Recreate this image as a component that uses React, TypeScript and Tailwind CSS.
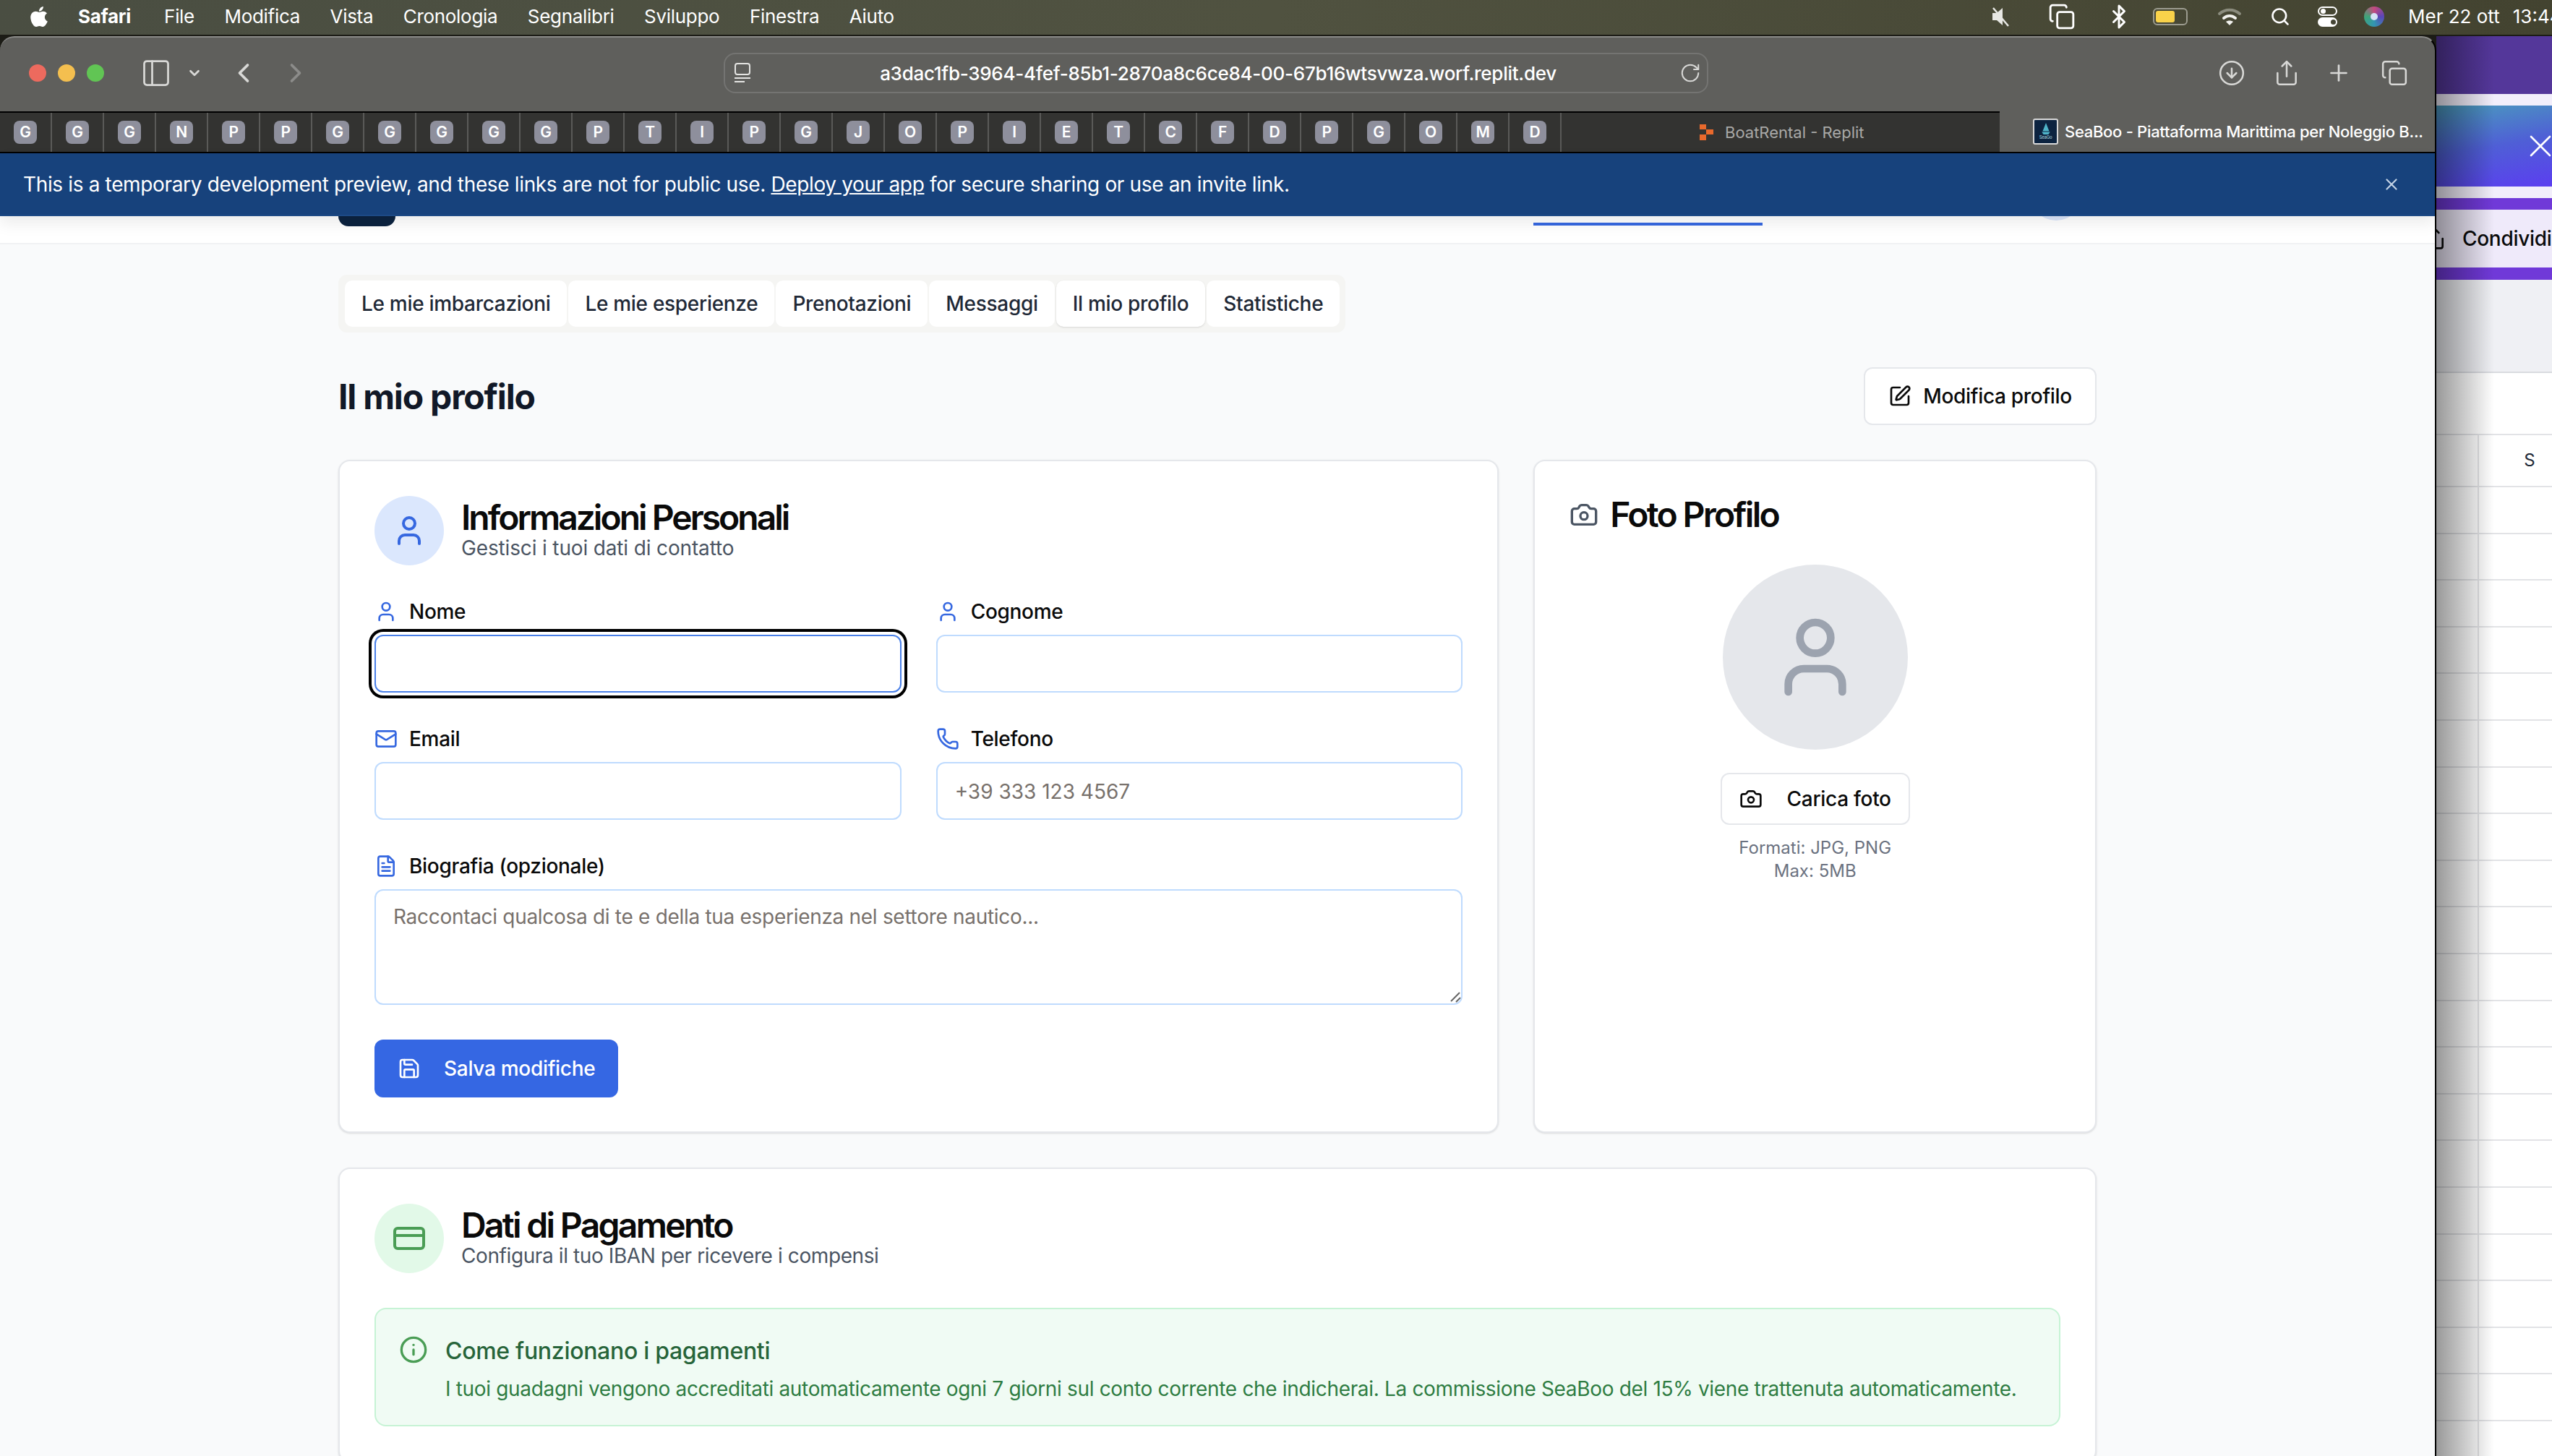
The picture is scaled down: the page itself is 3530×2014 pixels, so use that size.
import React from 'react';
import {
  Bluetooth,
  Camera,
  ChevronDown,
  ChevronLeft,
  ChevronRight,
  CircleArrowDown,
  Copy,
  CreditCard,
  FileText,
  Info,
  Mail,
  PanelLeft,
  Phone,
  Plus,
  RotateCw,
  Save,
  Search,
  Share,
  SquarePen,
  User,
  X,
} from 'lucide-react';
import { FaApple } from 'react-icons/fa';

const menuItems = ['File', 'Modifica', 'Vista', 'Cronologia', 'Segnalibri', 'Sviluppo', 'Finestra', 'Aiuto'];
const tabLetters = 'GGGNPPGGGGGPTIPGJOPIETCFDPGOMD'.split('');
const pageTabs = ['Le mie imbarcazioni', 'Le mie esperienze', 'Prenotazioni', 'Messaggi', 'Il mio profilo', 'Statistiche'];

const MenuBar = () => (
  <div className="flex h-[48px] shrink-0 items-center bg-linear-to-r from-[#4a4e42] via-[#505240] to-[#434330] pb-[3px] text-[26px] text-white">
    <FaApple className="ml-[38px] mr-[38px] h-[32px] w-[32px]" />
    <span className="mr-[46px] font-bold">Safari</span>
    <div className="flex gap-[41.5px]">
      {menuItems.map((item) => (
        <span key={item}>{item}</span>
      ))}
    </div>
    <div className="ml-auto flex w-[776px] items-center overflow-hidden whitespace-nowrap tracking-normal">
      <svg viewBox="0 0 26 28" className="h-[28px] w-[26px] shrink-0" fill="none">
        <path d="M2 9h6l8-7v24l-8-7H2z" fill="#e8e8e4" />
        <path d="M3 2l21 25" stroke="#e8e8e4" strokeWidth="2.5" />
      </svg>
      <Copy className="ml-[53px] h-[38px] w-[38px] shrink-0" strokeWidth={1.8} />
      <Bluetooth className="ml-[42px] h-[36px] w-[36px] shrink-0" strokeWidth={2} />
      <div className="ml-[29px] flex h-[24px] w-[48px] shrink-0 items-center rounded-[6px] border-2 border-[#9b9b8f] p-[2px]">
        <div className="h-full w-[26px] rounded-[3px] bg-[#f9d24a]" />
      </div>
      <svg viewBox="0 0 34 26" className="ml-[41px] h-[26px] w-[34px] shrink-0" fill="none" strokeLinecap="round">
        <path d="M3 9c8-7 20-7 28 0" stroke="#8b8c7e" strokeWidth="4" />
        <path d="M9 15c5-4 11-4 16 0" stroke="#f2f2ee" strokeWidth="4" />
        <path d="M17 25l-5-5c3-2 7-2 10 0z" fill="#f2f2ee" />
      </svg>
      <Search className="ml-[39px] h-[28px] w-[28px] shrink-0" strokeWidth={2.2} />
      <div className="ml-[38px] flex w-[27px] shrink-0 flex-col gap-[2px]">
        <div className="flex h-[13px] items-center rounded-full border-2 border-white pl-[2px]">
          <div className="h-[7px] w-[7px] rounded-full bg-white" />
        </div>
        <div className="flex h-[13px] items-center justify-end rounded-full bg-white pr-[2px]">
          <div className="h-[7px] w-[7px] rounded-full bg-[#454535]" />
        </div>
      </div>
      <div className="ml-[37px] flex h-[28px] w-[28px] shrink-0 items-center justify-center rounded-full bg-[conic-gradient(#c64a7e,#5a46b8,#3296b0,#3fa578,#c64a7e)]">
        <div className="h-[10px] w-[10px] rounded-full bg-[#d5e4f5]" />
      </div>
      <span className="ml-[33px]">Mer 22 ott</span>
      <span className="ml-[18px]">13:44</span>
    </div>
  </div>
);

const Toolbar = () => (
  <div className="flex h-[102px] shrink-0 items-center pb-[4px] text-[#d8d8d6]">
    <div className="ml-[40px] flex gap-[16px]">
      <div className="h-[24px] w-[24px] rounded-full bg-[#ed6a5e]" />
      <div className="h-[24px] w-[24px] rounded-full bg-[#f4bf4f]" />
      <div className="h-[24px] w-[24px] rounded-full bg-[#61c554]" />
    </div>
    <PanelLeft className="ml-[50px] h-[44px] w-[44px]" strokeWidth={1.5} />
    <ChevronDown className="ml-[20px] h-[22px] w-[22px]" strokeWidth={3} />
    <ChevronLeft className="ml-[35px] h-[44px] w-[44px]" strokeWidth={2} />
    <ChevronRight className="ml-[28px] h-[44px] w-[44px] text-[#8c8c8a]" strokeWidth={2} />
    <div className="ml-[570px] flex h-[56px] w-[1362px] items-center rounded-[16px] border-2 border-[#747472]">
      <svg viewBox="0 0 24 28" className="ml-[12px] h-[28px] w-[24px]" fill="none" stroke="#e4e4e2" strokeWidth="2">
        <rect x="2" y="1" width="20" height="15" rx="3" />
        <path d="M1 21h22M1 26h14" />
      </svg>
      <span className="flex-1 pl-[8px] text-center text-[26px] font-medium tracking-[-0.27px] text-white">a3dac1fb-3964-4fef-85b1-2870a8c6ce84-00-67b16wtsvwza.worf.replit.dev</span>
      <RotateCw className="mr-[8px] h-[30px] w-[30px]" strokeWidth={1.6} />
    </div>
    <CircleArrowDown className="ml-[705px] h-[38px] w-[38px]" strokeWidth={1.6} />
    <Share className="ml-[38px] h-[40px] w-[38px]" strokeWidth={1.6} />
    <Plus className="ml-[35px] h-[36px] w-[36px]" strokeWidth={1.8} />
    <Copy className="ml-[40px] h-[38px] w-[38px]" strokeWidth={1.6} />
  </div>
);

const TabStrip = () => (
  <div className="flex h-[58px] shrink-0 border-b-2 border-black">
    <div className="flex w-[2766px] border-t-2 border-black bg-[#333331]">
      {tabLetters.map((letter, i) => (
        <div key={i} className="flex w-[72px] items-center justify-center border-r-2 border-[#5a5a58]">
          <div className="flex h-[32px] w-[32px] items-center justify-center rounded-[8px] bg-[#8e8f9c] text-[21px] font-semibold text-white">{letter}</div>
        </div>
      ))}
      <div className="flex flex-1 items-center pl-[191px] text-[22px] tracking-normal text-[#a9a9a7]">
        <svg viewBox="0 0 20 22" className="mr-[15px] h-[22px] w-[20px]">
          <path d="M0 0h9v7H0zM9 7h10v7H9zM0 14h9v8H0z" fill="#e8692c" />
        </svg>
        BoatRental - Replit
      </div>
    </div>
    <div className="flex flex-1 items-center pl-[46px] text-[22px] font-medium text-white">
      <div className="mr-[9px] flex h-[36px] w-[35px] shrink-0 flex-col items-center justify-center rounded-[3px] border-2 border-[#d8d8d8] bg-[#0c2340]">
        <svg viewBox="0 0 12 14" className="h-[16px] w-[14px]">
          <path d="M6 0l4 10H2zM1 11h10l-2 3H3z" fill="#4fb3c8" />
        </svg>
        <span className="text-[6px] leading-[8px] text-[#9fc8d4]">SeaGo</span>
      </div>
      <span className="truncate">SeaBoo - Piattaforma Marittima per Noleggio B...</span>
    </div>
  </div>
);

const Banner = () => (
  <div className="relative z-10 flex h-[87px] shrink-0 items-center justify-between border-b-2 border-[#1d4a85] bg-[#17427c] pl-[32px] pr-[47px] text-[28px] tracking-[-0.35px] text-white shadow-[0_10px_20px_rgba(0,0,0,0.08)]">
    <span>
      This is a temporary development preview, and these links are not for public use. <span className="underline">Deploy your app</span> for secure sharing or use an invite link.
    </span>
    <X className="h-[26px] w-[26px] text-[#c4d3e6]" strokeWidth={2} />
  </div>
);

const Field = ({ icon: Icon, label, placeholder, focused }: { icon: React.ElementType; label: string; placeholder?: string; focused?: boolean }) => (
  <div className="flex flex-col gap-[12px]">
    <label className="flex items-center gap-[16px] text-[28px] font-medium leading-[40px] text-[#0a0a0a]">
      <Icon className="h-[32px] w-[32px] text-[#3668e0]" />
      {label}
    </label>
    <input
      readOnly
      placeholder={placeholder}
      className={
        focused
          ? 'h-[80px] w-full rounded-[12px] border-2 border-[#4a80e8] bg-white px-[24px] text-[28px] outline-none ring-4 ring-black ring-offset-4'
          : 'h-[80px] w-full rounded-[12px] border-2 border-[#bfdbfe] bg-white px-[24px] pt-[2px] text-[28px] tracking-normal outline-none placeholder:text-[#78716c]'
      }
    />
  </div>
);

const PersonalCard = () => (
  <div className="col-span-2 rounded-[16px] border-2 border-[#e5e7eb] bg-white p-[48px] pb-[47px] shadow-sm">
    <div className="flex items-center gap-[24px]">
      <div className="flex h-[96px] w-[96px] items-center justify-center rounded-full bg-[#dbe7fd]">
        <User className="h-[48px] w-[48px] text-[#3668e0]" />
      </div>
      <div>
        <h2 className="text-[48px] font-semibold leading-[52px] tracking-[-3px] text-[#0a0a0a]">Informazioni Personali</h2>
        <p className="-mt-[4px] text-[28px] leading-[40px] tracking-[-0.15px] text-[#4b5563]">Gestisci i tuoi dati di contatto</p>
      </div>
    </div>
    <div className="mt-[44px] grid grid-cols-2 gap-x-[48px] gap-y-[44px]">
      <Field icon={User} label="Nome" focused />
      <Field icon={User} label="Cognome" />
      <Field icon={Mail} label="Email" />
      <Field icon={Phone} label="Telefono" placeholder="+39 333 123 4567" />
    </div>
    <div className="mt-[44px] flex flex-col gap-[12px]">
      <label className="flex items-center gap-[16px] text-[28px] font-medium leading-[40px] text-[#0a0a0a]">
        <FileText className="h-[32px] w-[32px] text-[#3668e0]" />
        Biografia (opzionale)
      </label>
      <div className="relative">
        <textarea
          readOnly
          placeholder="Raccontaci qualcosa di te e della tua esperienza nel settore nautico..."
          className="block h-[160px] w-full resize-none rounded-[12px] border-2 border-[#bfdbfe] bg-white px-[24px] py-[16px] text-[28px] leading-[40px] outline-none placeholder:text-[#78716c]"
        />
        <svg viewBox="0 0 16 16" className="absolute bottom-[3px] right-[2px] h-[16px] w-[16px]" stroke="#666666" strokeWidth="2">
          <path d="M2 14L14 2M9 15l6-6" />
        </svg>
      </div>
    </div>
    <button className="mt-[48px] flex h-[80px] items-center gap-[32px] rounded-[12px] bg-[#3567e3] px-[32px] text-[28px] font-medium text-white">
      <Save className="h-[32px] w-[32px]" />
      Salva modifiche
    </button>
  </div>
);

const PhotoCard = () => (
  <div className="flex flex-col rounded-[16px] border-2 border-[#e5e7eb] bg-white p-[48px] shadow-sm">
    <div className="flex items-center gap-[16px]">
      <Camera className="h-[40px] w-[40px] text-[#4b5563]" />
      <h2 className="text-[48px] font-semibold leading-[52px] tracking-[-2.7px] text-[#0a0a0a]">Foto Profilo</h2>
    </div>
    <div className="mt-[43px] flex flex-col items-center">
      <div className="flex h-[256px] w-[256px] items-center justify-center rounded-full bg-[#e5e7eb]">
        <User className="h-[128px] w-[128px] text-[#9ca3af]" />
      </div>
      <button className="mt-[32px] flex h-[72px] items-center gap-[34px] rounded-[12px] border-2 border-[#e5e7eb] bg-white px-[24px] text-[28px] font-medium text-[#0a0a0a]">
        <Camera className="h-[32px] w-[32px]" />
        Carica foto
      </button>
      <p className="mt-[16px] text-center text-[24px] leading-[32px] tracking-normal text-[#6b7280]">
        Formati: JPG, PNG
        <br />
        Max: 5MB
      </p>
    </div>
  </div>
);

const PaymentCard = () => (
  <div className="mt-[48px] rounded-[16px] border-2 border-[#e5e7eb] bg-white p-[48px] shadow-sm">
    <div className="flex items-center gap-[24px]">
      <div className="flex h-[96px] w-[96px] items-center justify-center rounded-full bg-[#e2f9e8]">
        <CreditCard className="h-[48px] w-[48px] text-[#4a9d55]" />
      </div>
      <div>
        <h2 className="text-[48px] font-semibold leading-[52px] tracking-[-2.7px] text-[#0a0a0a]">Dati di Pagamento</h2>
        <p className="-mt-[4px] text-[28px] leading-[40px] tracking-[-0.4px] text-[#4b5563]">Configura il tuo IBAN per ricevere i compensi</p>
      </div>
    </div>
    <div className="mt-[48px] flex gap-[24px] rounded-[16px] border-2 border-[#c6f3d5] bg-[#f0fbf4] px-[32px] pb-[30px] pt-[34px]">
      <Info className="mt-[2px] h-[40px] w-[40px] shrink-0 text-[#4a9d55]" />
      <div>
        <h3 className="text-[32px] font-medium leading-[48px] text-[#27643a]">Come funzionano i pagamenti</h3>
        <p className="mt-[8px] text-[28px] leading-[40px] tracking-[-0.33px] text-[#2f7d43]">
          I tuoi guadagni vengono accreditati automaticamente ogni 7 giorni sul conto corrente che indicherai. La commissione SeaBoo del 15% viene trattenuta automaticamente.
        </p>
      </div>
    </div>
  </div>
);

const ProfilePage = () => (
  <div className="min-h-0 flex-1 overflow-hidden bg-[#f9fafb]">
    <div className="flex h-[39px] items-start overflow-hidden border-b-2 border-[#f1f2f4] bg-white">
      <div className="ml-[468px] h-[14px] w-[79px] rounded-b-[14px] bg-[#0c2340]" />
      <div className="ml-[1574px] mt-[9px] h-[4px] w-[317px] bg-[#3668e0]" />
      <div className="-mt-[66px] ml-[370px] h-[72px] w-[72px] rounded-full bg-[#dbe6fb]" />
    </div>
    <div className="mx-auto w-[2432px] pt-[42px]">
      <div className="flex h-[80px] w-fit items-center gap-[2px] rounded-[12px] bg-[#f5f5f3] py-[8px] pl-[9px] pr-[8px]">
        {pageTabs.map((tab) => (
          <div
            key={tab}
            className={
              tab === 'Il mio profilo'
                ? 'flex h-[64px] items-center rounded-[10px] bg-white px-[23px] text-[28px] font-medium text-[#1f2937] shadow-sm'
                : 'flex h-[64px] items-center rounded-[10px] bg-white px-[23px] text-[28px] font-medium text-[#1f2937]'
            }
          >
            {tab}
          </div>
        ))}
      </div>
      <div className="mt-[48px] flex h-[80px] items-center justify-between">
        <h1 className="pt-[2px] text-[48px] font-bold tracking-tight text-[#111827]">Il mio profilo</h1>
        <button className="flex h-[80px] items-center gap-[16px] rounded-[12px] border-2 border-[#e5e7eb] bg-white px-[32px] text-[28px] font-medium text-[#0a0a0a]">
          <SquarePen className="h-[32px] w-[32px]" />
          Modifica profilo
        </button>
      </div>
      <div className="mt-[48px] grid grid-cols-3 gap-[48px]">
        <PersonalCard />
        <PhotoCard />
      </div>
      <PaymentCard />
    </div>
  </div>
);

const rows = Array.from({ length: 22 }, (_, i) => i);

const SidePanel = () => (
  <div className="relative flex min-w-0 flex-1 flex-col overflow-hidden bg-white">
    <div className="h-[80px] shrink-0 bg-[#54379a]" />
    <div className="h-[16px] shrink-0 bg-[#f2eefb]" />
    <div className="flex h-[112px] shrink-0 items-center justify-end bg-[linear-gradient(170deg,#4a9bbd_0%,#4f5fd6_50%,#5b3ef0_100%)]">
      <X className="-mr-[10px] h-[52px] w-[52px] text-white" strokeWidth={1.2} />
    </div>
    <div className="h-[16px] shrink-0 bg-[#f2eefb]" />
    <div className="h-[16px] shrink-0 bg-[#7039d8]" />
    <div className="flex h-[80px] shrink-0 items-center gap-[22px] whitespace-nowrap bg-[#efeafa] text-[28px] font-medium text-[#0a0a0a]">
      <Share className="-ml-[18px] h-[32px] w-[32px] shrink-0" />
      Condividi
    </div>
    <div className="h-[17px] shrink-0 bg-[#7039d8]" />
    <div className="h-[129px] shrink-0 border-b-2 border-[#d9dbe0] bg-[#eff0f4]" />
    <div className="h-[84px] shrink-0" />
    {rows.map((row) => (
      <div key={row} className={row === 0 ? 'flex h-[72px] shrink-0 border-t-2 border-[#e2e3e6]' : 'flex h-[64.6px] shrink-0 border-t-2 border-[#e2e3e6]'}>
        <div className="w-[59px] shrink-0 border-r-2 border-[#e2e3e6]" />
        <div className="flex w-[140px] shrink-0 items-center justify-center text-[24px] tracking-normal text-[#1f2937]">{row === 0 ? 'S' : ''}</div>
      </div>
    ))}
    <div className="absolute inset-y-0 left-0 w-[80px] bg-linear-to-r from-black/40 to-transparent" />
  </div>
);

export default function App() {
  return (
    <div className="flex h-[2014px] w-[3530px] flex-col overflow-hidden bg-[#1c1c16] font-[Inter,sans-serif] tracking-[-0.3px]">
      <MenuBar />
      <div className="mt-[2px] flex min-h-0 flex-1">
        <div className="flex w-[3370px] shrink-0 flex-col overflow-hidden rounded-t-[20px] border-r-2 border-t-2 border-r-black border-t-[#8a8a88] bg-[#5f5f5c]">
          <Toolbar />
          <TabStrip />
          <Banner />
          <ProfilePage />
        </div>
        <SidePanel />
      </div>
    </div>
  );
}
